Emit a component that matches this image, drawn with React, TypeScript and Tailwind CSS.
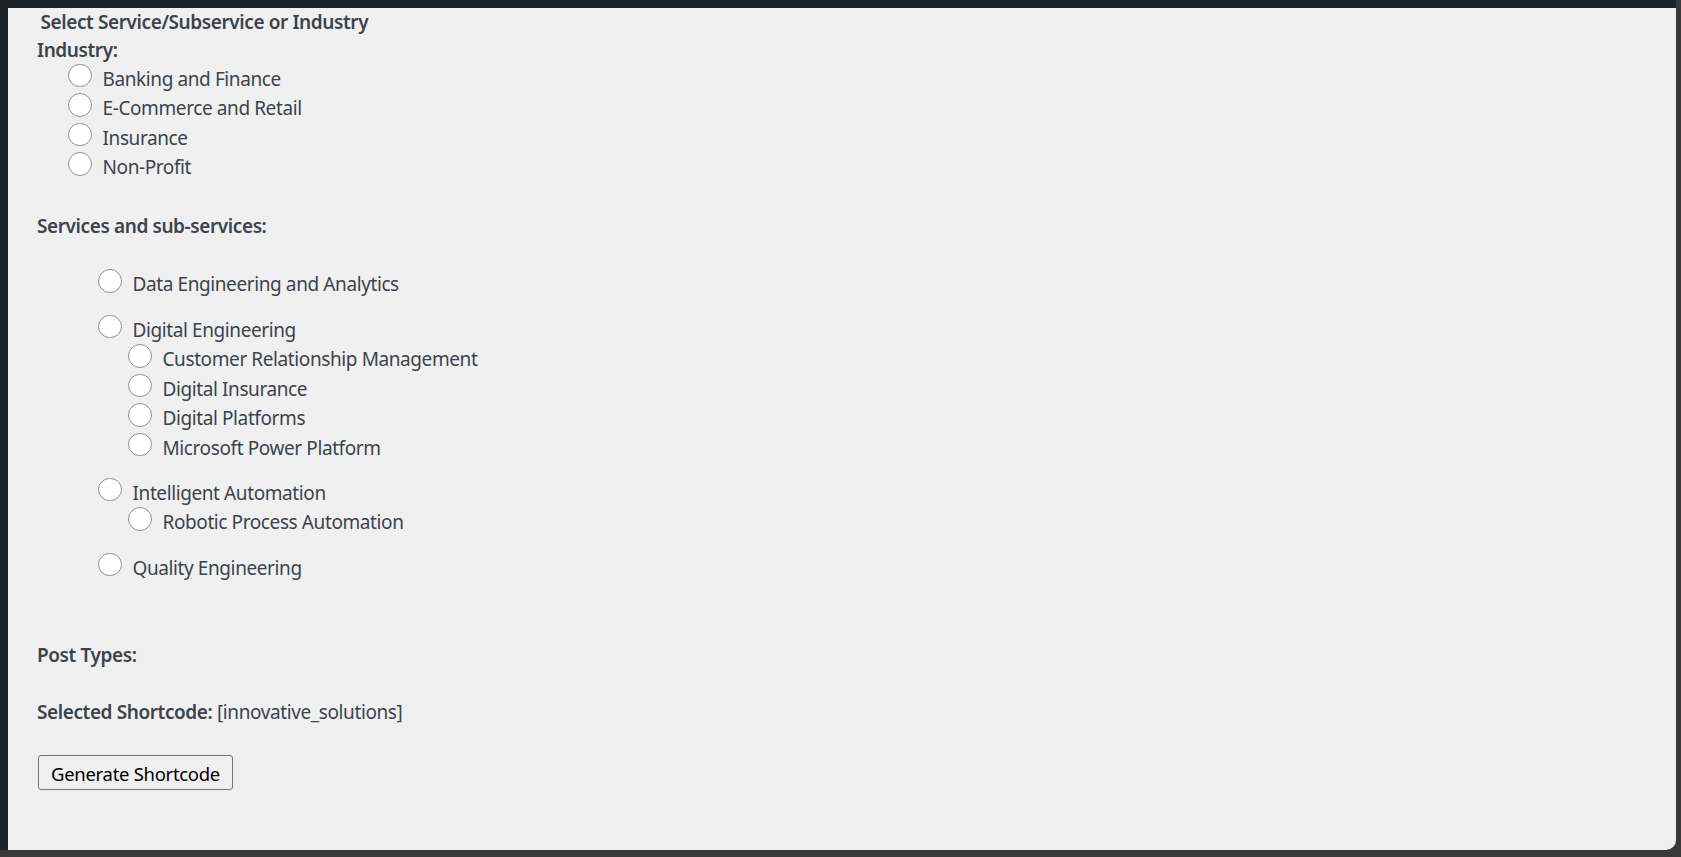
import React from 'react';

type Item = { label: string; children?: string[] };

const industries = ['Banking and Finance', 'E-Commerce and Retail', 'Insurance', 'Non-Profit'];

const services: Item[] = [
  { label: 'Data Engineering and Analytics' },
  {
    label: 'Digital Engineering',
    children: [
      'Customer Relationship Management',
      'Digital Insurance',
      'Digital Platforms',
      'Microsoft Power Platform',
    ],
  },
  { label: 'Intelligent Automation', children: ['Robotic Process Automation'] },
  { label: 'Quality Engineering' },
];

function Radio({ label }: { label: string }) {
  return (
    <label className="flex h-[29.5px] items-center gap-[11px] leading-[29.5px]">
      <span className="block h-[23.5px] w-[23.5px] -translate-y-[4px] rounded-full border-[1.5px] border-[#8c8f94] bg-white" />
      <span>{label}</span>
    </label>
  );
}

export default function App() {
  return (
    <div className="h-[857px] w-[1681px] overflow-hidden bg-[#393939]">
      <div
        className="h-[850px] w-[1676px] rounded-br-[10px] border-t-8 border-l-8 border-[#1d2327] bg-[#f0f0f0] pl-[29px] text-[19px] text-[#3c434a] tracking-[-0.4px]"
        style={{ fontFamily: '"Noto Sans", "Open Sans", sans-serif' }}
      >
        {/* heading */}
        <div className="ml-[3.5px] h-[28px] font-semibold leading-[28px]">
          Select Service/Subservice or Industry
        </div>

        {/* industry */}
        <div className="h-[28.5px] font-semibold leading-[28.5px]">Industry:</div>
        <div className="flex flex-col pl-[31px]">
          {industries.map((i) => (
            <Radio key={i} label={i} />
          ))}
        </div>

        {/* services */}
        <div className="mt-[29px] h-[28px] font-semibold leading-[28px]">
          Services and sub-services:
        </div>
        <ul className="mt-[30.75px] flex flex-col gap-[15.75px] pl-[61px]">
          {services.map((s) => (
            <li key={s.label}>
              <Radio label={s.label} />
              {s.children && (
                <div className="flex flex-col pl-[30px]">
                  {s.children.map((c) => (
                    <Radio key={c} label={c} />
                  ))}
                </div>
              )}
            </li>
          ))}
        </ul>

        {/* post types */}
        <div className="mt-[57.75px] h-[28px] font-semibold leading-[28px]">Post Types:</div>

        <div className="mt-[29px] h-[28px] leading-[28px]">
          <span className="font-semibold">Selected Shortcode:</span> [innovative_solutions]
        </div>

        <button className="ml-px mt-[29px] h-[35px] w-[195px] rounded-[3px] border border-[#767676] bg-[#f0f0f0] pt-[4px] text-[18.5px] tracking-[-0.3px] text-black">
          Generate Shortcode
        </button>
      </div>
    </div>
  );
}
